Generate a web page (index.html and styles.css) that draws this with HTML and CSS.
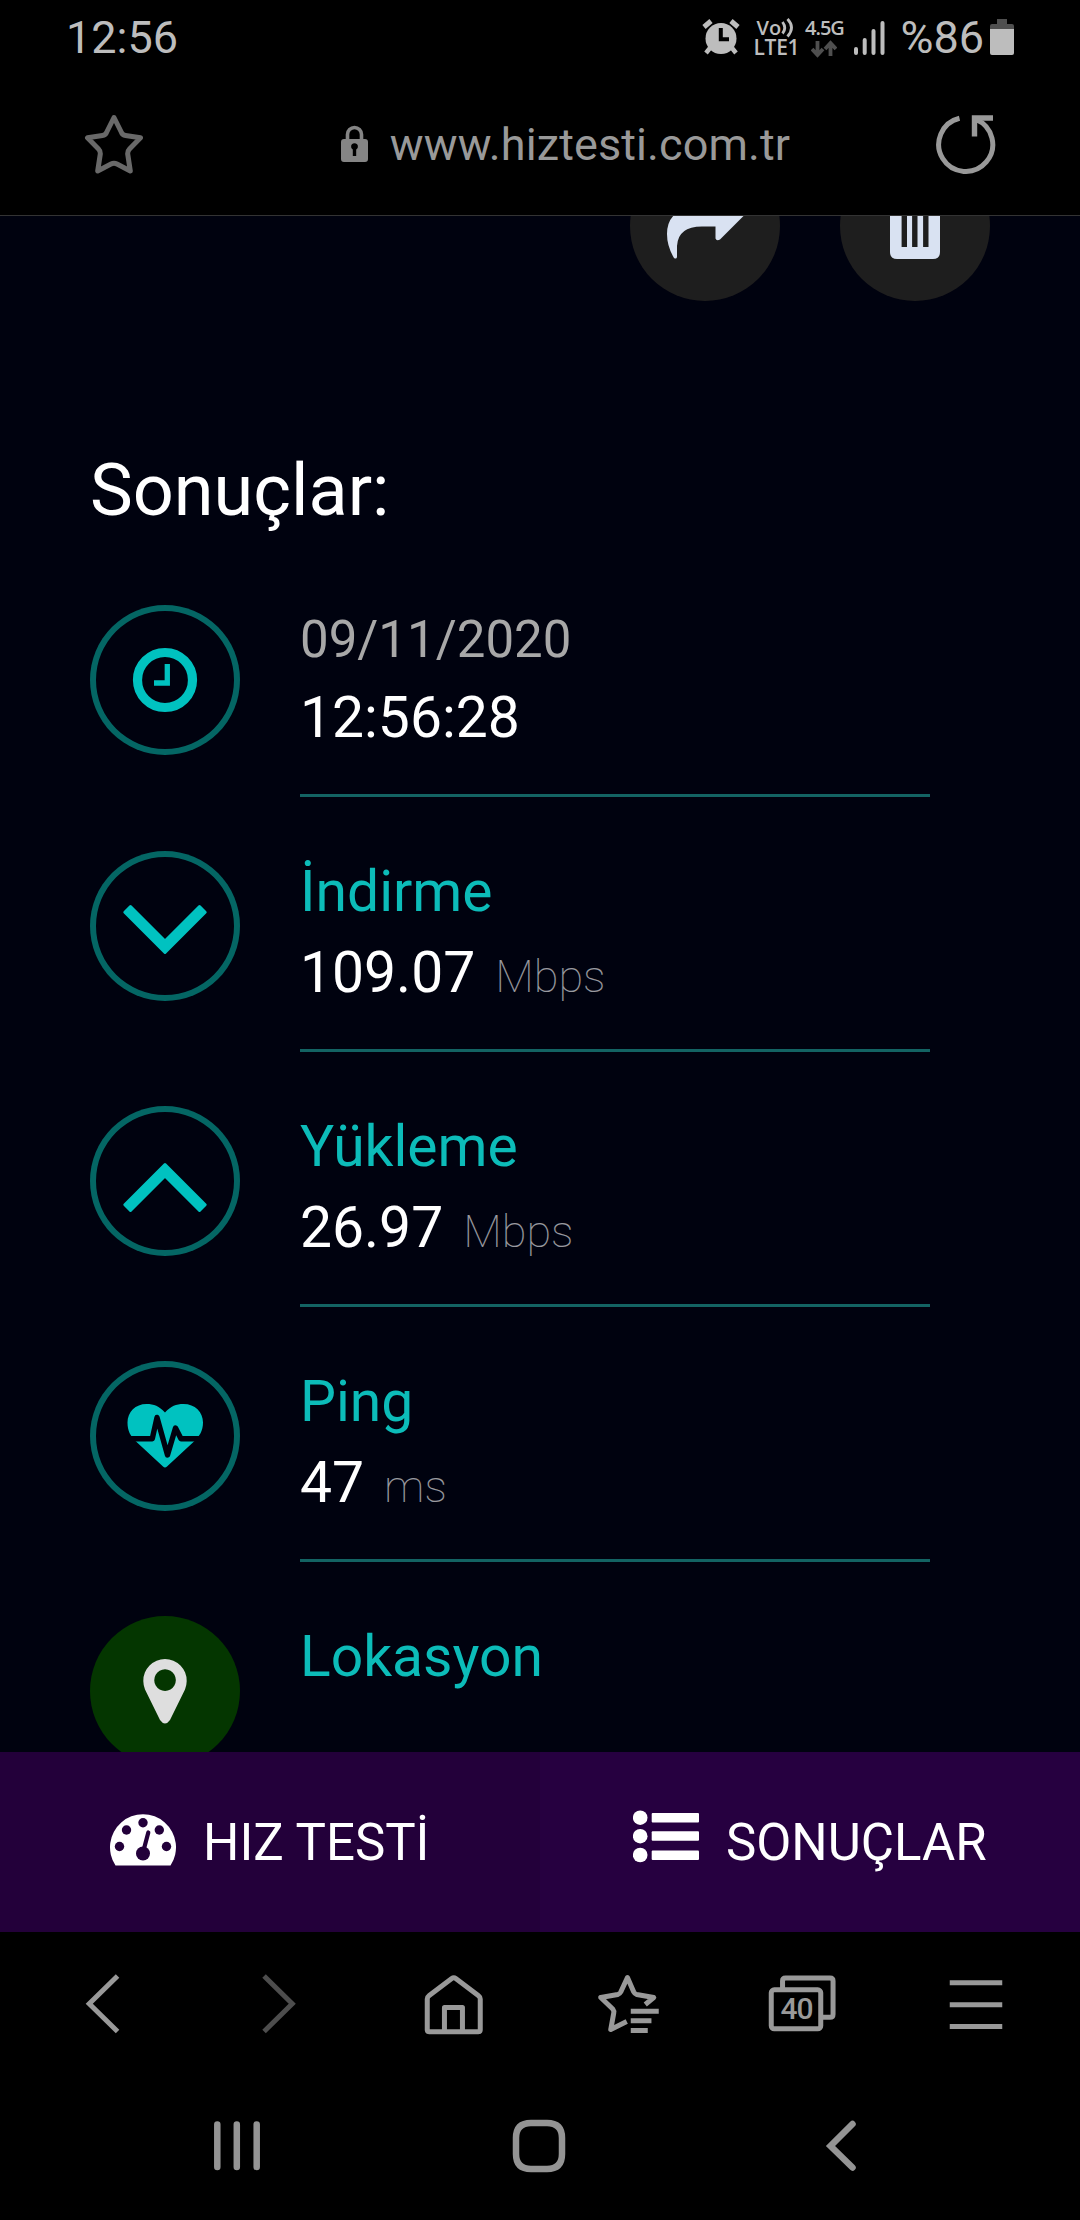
FILE: index.html
```html
<!DOCTYPE html>
<html lang="tr">
<head>
<meta charset="utf-8">
<title>Hız Testi - Sonuçlar</title>
<link rel="stylesheet" href="styles.css">
</head>
<body>
<header class="status">
  <span class="clock">12:56</span>
  <div class="indicators">
    <svg class="alarm" width="38" height="36" viewBox="0 0 38 36"><circle cx="19" cy="19.5" r="15.5" fill="#bdbdbd"/><path d="M2 8 9 2M36 8l-7-6" stroke="#bdbdbd" stroke-width="5"/><path d="M8 29l-4 5M30 29l4 5" stroke="#bdbdbd" stroke-width="4.5"/><path d="M18.8 9v11.2H27" fill="none" stroke="#000" stroke-width="4"/></svg>
    <div class="volte"><span class="vo">Vo<svg width="13" height="20" viewBox="0 0 13 20"><path d="M1.5 4q4.500 6 0 11.500M6.500 1q8 8.500 0 17.500" fill="none" stroke="#bdbdbd" stroke-width="2.800"/></svg></span><span class="lte">LTE1</span></div>
    <div class="network"><span>4.5G</span><svg width="26" height="18" viewBox="0 0 26 18"><path d="M6.500 1v13M1 9l5.500 6 5.500-6M19.500 16V3M14 9l5.500-6L25 9" fill="none" stroke="#4f4f4f" stroke-width="3.800"/></svg></div>
    <svg class="signal" width="31" height="35" viewBox="0 0 31 35"><path d="M2 29v4M10.700 20v13M19.500 11v22M28.500 3v30" stroke="#bdbdbd" stroke-width="4" stroke-linecap="round"/></svg>
    <span class="percent">%86</span>
    <svg class="battery" width="24" height="36" viewBox="0 0 24 36"><path d="M7 0h10v5h5q2 0 2 2v3H0V7q0-2 2-2h5z" fill="#4f4f4f"/><path d="M0 10h24v24q0 2-2 2H2q-2 0-2-2z" fill="#bdbdbd"/></svg>
  </div>
</header>
<div class="address">
  <svg width="60" height="60" viewBox="84 114 60 60"><path d="M114 117.500 121.500 132.500Q122.500 135 125.500 135.500L140.500 137.800 129.500 149Q127.500 151 127.700 154L130.300 171 117 164Q114 162.500 111 164L97.700 171 100.300 154Q100.500 151 98.500 149L87.500 137.800 102.500 135.500Q105.500 135 106.500 132.500Z" fill="none" stroke="#696969" stroke-width="5" stroke-linejoin="round"/></svg>
  <div class="url">
    <svg width="27" height="37" viewBox="0 0 27 37"><path d="M6.500 17V9.500a7 7 0 0 1 14 0V17" fill="none" stroke="#858585" stroke-width="3.600"/><path fill-rule="evenodd" fill="#858585" d="M3 14h21q3 0 3 3v17q0 3-3 3H3q-3 0-3-3V17q0-3 3-3zM11.800 31h3.400v-6.500a3.400 3.400 0 1 0-3.400 0z"/></svg>
    <span>www.hiztesti.com.tr</span>
  </div>
  <svg width="62" height="60" viewBox="935 113 62 60"><path d="M959.500 117.200A27 27 0 1 0 976 118.500" fill="none" stroke="#999" stroke-width="5"/><path d="M974.500 135.500V117h18.500" fill="none" stroke="#999" stroke-width="5.400"/></svg>
</div>
<main class="page">
  <div class="actions">
    <div class="action"><svg width="150" height="150" viewBox="630 151 150 150"><path d="M715.500 190 744 215.500 720 239.500Q716.500 241.500 715.500 238.500V226.500H702Q678 226.500 677 246V257Q676.500 259.500 674 258Q667 246 667 234Q667 208 700 206L715.500 205Z" fill="#d9e2f2"/></svg></div>
    <div class="action"><svg width="150" height="150" viewBox="840 151 150 150"><path d="M890 205h50v47q0 7-7 7h-36q-7 0-7-7z" fill="#d9e2f2"/><path d="M904.300 210v37M914.800 210v37M925.800 210v37" stroke="#1e1e1e" stroke-width="5.400"/></svg></div>
  </div>
  <h1 class="title">Sonuçlar:</h1>
  <section class="row first">
    <div class="badge"><svg width="150" height="150" viewBox="90 605 150 150"><circle cx="165" cy="680" r="27.500" fill="none" stroke="#00c2c0" stroke-width="9.200"/><path d="M167.300 664v19H154" fill="none" stroke="#00c2c0" stroke-width="5.300"/></svg></div>
    <div class="info"><div class="date">09/11/2020</div><div class="value">12:56:28</div></div>
  </section>
  <section class="row">
    <div class="badge"><svg width="150" height="150" viewBox="90 851 150 150"><path d="M130.500 906.500 165 941 199.500 906.500 205.200 912.200 165 952.400 124.800 912.200Z" fill="#00c2c0" stroke="#00c2c0" stroke-width="3" stroke-linejoin="round"/></svg></div>
    <div class="info"><div class="label">İndirme</div><div class="value">109.07<span class="unit">Mbps</span></div></div>
  </section>
  <section class="row">
    <div class="badge"><svg width="150" height="150" viewBox="90 1106 150 150"><path d="M130.500 1210.500 165 1176 199.500 1210.500 205.200 1204.800 165 1164.600 124.800 1204.800Z" fill="#00c2c0" stroke="#00c2c0" stroke-width="3" stroke-linejoin="round"/></svg></div>
    <div class="info"><div class="label">Yükleme</div><div class="value">26.97<span class="unit">Mbps</span></div></div>
  </section>
  <section class="row">
    <div class="badge"><svg width="150" height="150" viewBox="90 1361 150 150"><path d="M165 1412.500C171 1406 176 1404 183.500 1404 195 1404 203 1412 203 1422.500 203 1431 199.500 1436 194 1441.500L167 1466.500Q165 1468.500 163 1466.500L136 1441.500C130.500 1436 127.500 1431 127.500 1422.500 127.500 1412 135.500 1404 146.500 1404 154 1404 159 1406 165 1412.500Z" fill="#00c2c0"/><path d="M126 1438.700H152.300L157 1417.500 167.500 1455 175.500 1428 181 1438.700H205" fill="none" stroke="#00020f" stroke-width="5.400" stroke-linejoin="round"/></svg></div>
    <div class="info"><div class="label">Ping</div><div class="value">47<span class="unit">ms</span></div></div>
  </section>
  <section class="row">
    <div class="badge green"><svg width="150" height="150" viewBox="90 1616 150 150"><path fill-rule="evenodd" fill="#dedede" d="M165 1659A21.700 21.700 0 0 1 186.700 1681Q186.700 1685 185 1689.500L170 1720Q165 1727 160 1720L145 1689.500Q143.300 1685 143.300 1681A21.700 21.700 0 0 1 165 1659ZM165 1669.300a10.800 10.800 0 1 0 .1 0z"/></svg></div>
    <div class="info"><div class="label">Lokasyon</div></div>
  </section>
</main>
<nav class="tabs">
  <a class="tab speed">
    <svg width="66" height="53" viewBox="110 1812.500 66 53"><path d="M115.500 1865A33 33 0 1 1 170.500 1865Z" fill="#fff"/><g fill="#23003a"><circle cx="143" cy="1822.300" r="4.700"/><circle cx="126.500" cy="1829.500" r="4.700"/><circle cx="159.300" cy="1829.500" r="4.700"/><circle cx="119.500" cy="1846" r="4.700"/><circle cx="166.500" cy="1846" r="4.700"/><circle cx="143" cy="1853" r="7"/></g><path d="M143 1852 148.300 1832" stroke="#23003a" stroke-width="4.200" stroke-linecap="round"/></svg>
    <span>HIZ TESTİ</span>
  </a>
  <a class="tab results">
    <svg width="66" height="53" viewBox="633 1810 66 53"><g fill="#fff"><circle cx="640.200" cy="1817.700" r="7.300"/><circle cx="640.200" cy="1836.200" r="7.300"/><circle cx="640.200" cy="1855" r="7.300"/><rect x="651.700" y="1813" width="47.300" height="9.500" rx="1"/><rect x="651.700" y="1831.300" width="47.300" height="9.500" rx="1"/><rect x="651.700" y="1850.400" width="47.300" height="9.500" rx="1"/></g></svg>
    <span>SONUÇLAR</span>
  </a>
</nav>
<nav class="toolbar">
  <div class="tool"><svg width="70" height="62" viewBox="68.750 1973 70 62"><path d="M117.300 1976 89 2003.700 117.300 2031.500"/></svg></div>
  <div class="tool"><svg class="dim" width="70" height="62" viewBox="243.250 1973 70 62"><path d="M264.300 1976 292.500 2003.700 264.300 2031.500"/></svg></div>
  <div class="tool"><svg width="70" height="62" viewBox="417.750 1973 70 62"><path stroke-linejoin="round" d="M429 2031.700H478Q480 2031.700 480 2029.700V1999Q480 1997 478 1995.500L455.500 1978.500Q453.500 1977 451.500 1978.500L429 1995.500Q427 1997 427 1999V2029.700Q427 2031.700 429 2031.700ZM444.200 2031V2007.500H462.200V2031"/></svg></div>
  <div class="tool"><svg width="70" height="62" viewBox="592.250 1973 70 62"><path stroke-linejoin="round" d="M645.500 2004.500 654 1997.500 637 1994.500Q635 1994 634 1992L627.700 1977.500 621 1992Q620 1994 618 1994.500L601 1997.500 613 2009Q614.500 2011 614 2013L611 2029.500 627 2021.500"/><path d="M631 2011.200H659M631 2020.700H651.700M631 2030.500H648"/></svg></div>
  <div class="tool windows">
    <svg width="70" height="62" viewBox="766.750 1973 70 62"><rect x="771" y="1989.800" width="49.500" height="39" rx="3"/><path d="M782.300 1988V1981Q782.300 1978 785.300 1978H829.800Q832.800 1978 832.800 1981V2014.300Q832.800 2017.300 829.800 2017.300H822"/></svg>
    <span>40</span>
  </div>
  <div class="tool"><svg width="70" height="62" viewBox="941.250 1973 70 62"><path d="M950 1982.800H1002.500M950 2004.700H1002.500M950 2026.500H1002.500"/></svg></div>
</nav>
<nav class="system">
  <svg width="54" height="54" viewBox="210 2119 54 54"><path stroke-linecap="round" d="M217.300 2124.500V2167M236.800 2124.500V2167M256.700 2124.500V2167"/></svg>
  <svg width="54" height="54" viewBox="512 2119 54 54"><path d="M531 2123H547C557 2123 562 2128 562 2138V2154C562 2164 557 2169 547 2169H531C521 2169 516 2164 516 2154V2138C516 2128 521 2123 531 2123Z"/></svg>
  <svg width="54" height="54" viewBox="814 2119 54 54"><path stroke-linecap="round" d="M852.500 2124 830.500 2146 852.500 2167.500"/></svg>
</nav>
</body>
</html>
```
FILE: styles.css
```css
* { box-sizing: border-box; }
body {
  margin: 0;
  width: 1080px;
  height: 2220px;
  overflow: hidden;
  display: flex;
  flex-direction: column;
  background: #000;
  color: #fff;
  font-family: Roboto, "Liberation Sans", sans-serif;
}
svg { display: block; flex: none; }

.status {
  height: 74px;
  padding: 0 66px 0 66px;
  display: flex;
  justify-content: space-between;
  align-items: center;
  color: #bdbdbd;
}
.clock, .percent { font-size: 45px; line-height: 76px; padding-top: 2px; }
.indicators { display: flex; align-items: center; height: 74px; }
.volte { margin-left: 13px; width: 43px; display: flex; flex-direction: column; font-family: "Open Sans", Roboto, sans-serif; font-weight: 600; }
.vo { display: flex; font-size: 20px; line-height: 19px; padding-left: 3px; }
.lte { font-size: 21px; line-height: 19px; letter-spacing: -.3px; }
.network { margin-left: 9px; width: 38px; height: 38px; display: flex; flex-direction: column; align-items: center; gap: 2px; font-family: "Open Sans", Roboto, sans-serif; font-size: 20px; font-weight: 600; line-height: 20px; }
.signal { margin-left: 11px; }
.percent { margin: 0 6px 0 15px; }
.network span { letter-spacing: -1px; }

.address {
  height: 142px;
  padding: 0 83px 2px 84px;
  border-bottom: 1px solid #333;
  display: flex;
  justify-content: space-between;
  align-items: center;
}
.url { margin-left: 52px; display: flex; align-items: center; gap: 22px; color: #999; font-size: 45px; line-height: 60px; letter-spacing: .1px; }
.url span { padding-top: 2px; }

.page {
  height: 1536px;
  overflow: hidden;
  background: #00020f;
  padding-left: 90px;
}
.actions { margin-top: -65px; padding-right: 90px; display: flex; justify-content: flex-end; gap: 60px; }
.action { width: 150px; height: 150px; border-radius: 50%; background: #1e1e1e; }
.title { margin: 140px 0 0; font-size: 72px; font-weight: 400; line-height: 100px; }
.row { width: 840px; height: 255px; display: flex; gap: 60px; }
.first { margin-top: 64px; height: 246px; }
.badge { flex: none; width: 150px; height: 150px; border-radius: 50%; box-shadow: inset 0 0 0 6px #046664; }
.green { background: #043600; box-shadow: none; }
.info { flex: 1; height: 201px; border-bottom: 3px solid #136363; }
.first .info { height: 192px; }
.date { font-size: 51px; line-height: 69px; color: #a8a8a8; }
.first .value { line-height: 87px; }
.label { font-size: 57px; line-height: 81px; color: #0cbcb9; }
.value { font-size: 57px; line-height: 81px; }
.unit { margin-left: 20px; font-size: 45px; font-weight: 100; color: #fff; opacity: .6; }

.tabs { height: 180px; display: flex; font-size: 51px; }
.tab { width: 540px; display: flex; align-items: center; }
.tab span { line-height: 60px; }
.speed { padding: 0 0 6px 110px; gap: 27px; background: #23003a; }
.speed span { padding-top: 7px; }
.results { padding: 0 0 11px 93px; gap: 27px; background: #260040; }
.results span { padding-top: 12px; }

.toolbar { height: 142px; padding: 1px 16.500px 0; display: flex; align-items: center; }
.tool { flex: 1; display: flex; justify-content: center; }
.toolbar svg, .system svg { fill: none; stroke: #999; stroke-width: 5; }
.toolbar .dim { stroke: #4d4d4d; }
.windows { position: relative; }
.windows span { position: absolute; left: 66px; top: 18px; color: #999; font-size: 30px; font-weight: 500; line-height: 36px; letter-spacing: -1px; }

.system { height: 144px; padding-left: 210px; display: flex; gap: 248px; align-items: center; }
.system svg { stroke: #949494; stroke-width: 6.500; }
```
